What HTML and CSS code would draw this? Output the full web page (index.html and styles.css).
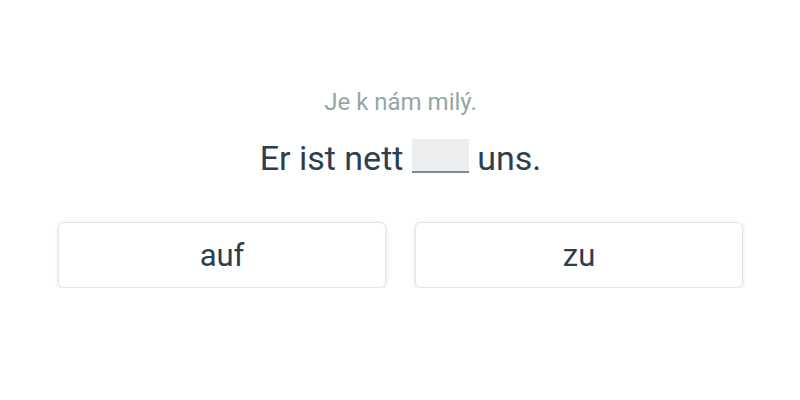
FILE: index.html
```html
<!DOCTYPE html>
<html lang="de">
<head>
<meta charset="utf-8">
<link rel="stylesheet" href="styles.css">
</head>
<body>
<main class="exercise">
  <p class="hint">Je k nám milý.</p>
  <p class="sentence">Er ist nett <span class="blank"></span> uns.</p>
  <div class="options">
    <button class="option">auf</button>
    <button class="option">zu</button>
  </div>
</main>
</body>
</html>
```
FILE: styles.css
```css
html, body {
  margin: 0;
  padding: 0;
  background: #ffffff;
}
body {
  font-family: Roboto, "Liberation Sans", sans-serif;
  color: #2c3e50;
}
.exercise {
  display: flex;
  flex-direction: column;
  align-items: center;
  padding: 87px 57px 0 58px;
}
.hint {
  margin: 0;
  font-size: 24px;
  line-height: 30px;
  color: #95a5a6;
}
.sentence {
  margin: 20px 0 0;
  font-size: 34px;
  line-height: 42px;
  color: #2c3e50;
}
.blank {
  display: inline-block;
  width: 57px;
  height: 32px;
  background: #eceef0;
  border-bottom: 2px solid #7f8c8d;
  vertical-align: -3px;
}
.options {
  margin-top: 43px;
  width: 100%;
  display: grid;
  grid-template-columns: 1fr 1fr;
  gap: 29px;
}
.option {
  height: 66px;
  background: #ffffff;
  border: 1px solid #e3e6e8;
  border-radius: 6px;
  box-shadow: 0 1px 4px rgba(0, 0, 0, 0.12);
  font-family: Roboto, "Liberation Sans", sans-serif;
  font-size: 31px;
  color: #2c3e50;
  cursor: pointer;
  padding: 0;
}
```
